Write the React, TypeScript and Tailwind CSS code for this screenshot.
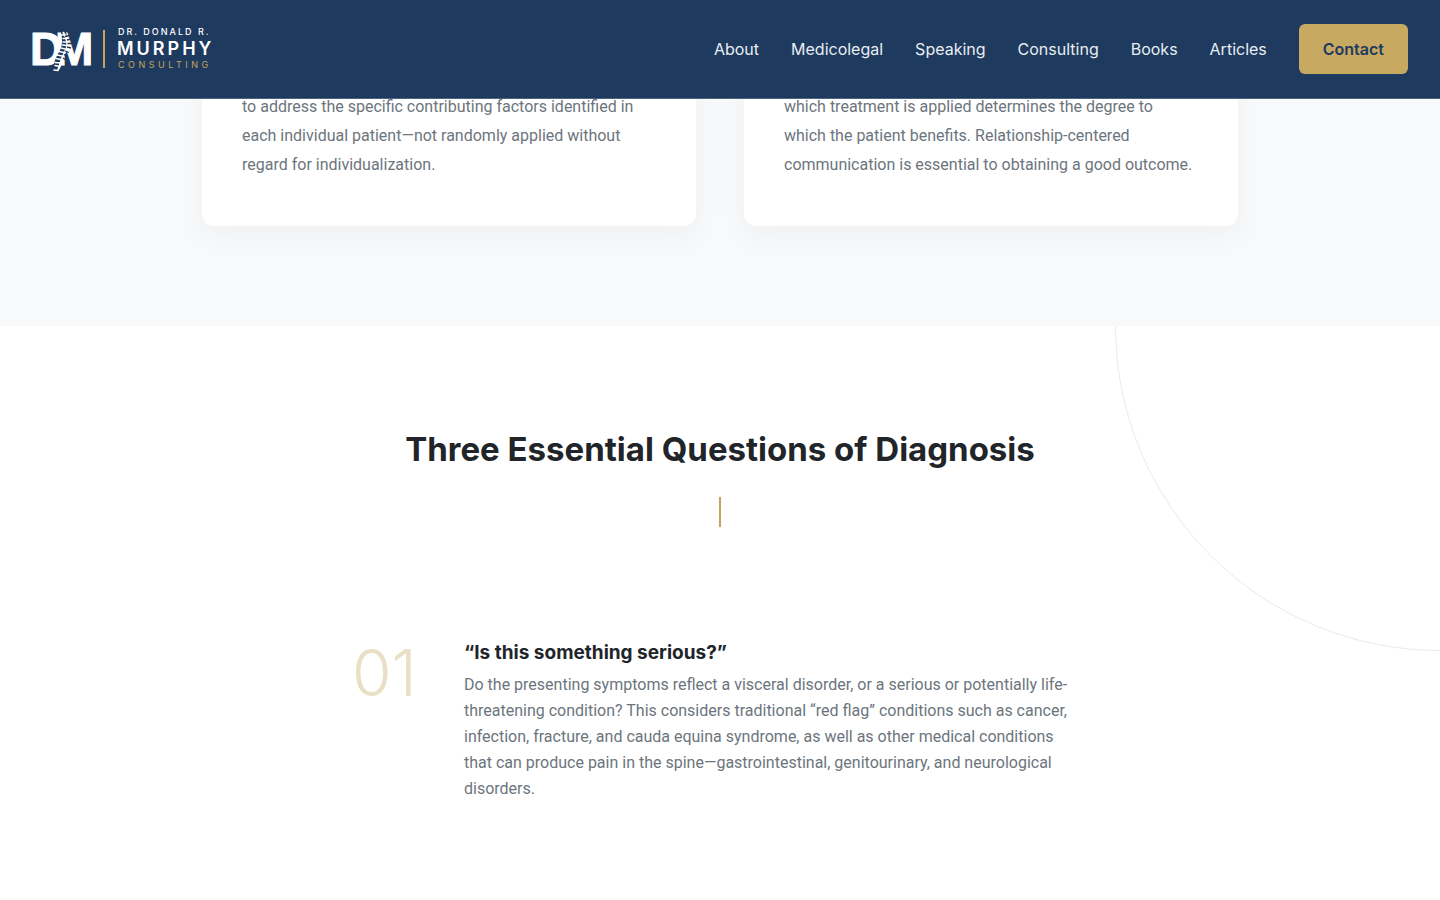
import React from "react";

const navLinks = ["About", "Medicolegal", "Speaking", "Consulting", "Books", "Articles"];

const cards = [
  "to address the specific contributing factors identified in each individual patient—not randomly applied without regard for individualization.",
  "which treatment is applied determines the degree to which the patient benefits. Relationship-centered communication is essential to obtaining a good outcome.",
];

const questions = [
  {
    number: "01",
    title: "“Is this something serious?”",
    text: "Do the presenting symptoms reflect a visceral disorder, or a serious or potentially life-threatening condition? This considers traditional “red flag” conditions such as cancer, infection, fracture, and cauda equina syndrome, as well as other medical conditions that can produce pain in the spine—gastrointestinal, genitourinary, and neurological disorders.",
  },
];

function Logo() {
  return (
    <svg
      className="overflow-visible"
      width="184"
      height="50"
      viewBox="0 0 184 50"
      role="img"
      aria-label="Dr. Donald R. Murphy Consulting"
    >
      <text y="41" fill="#fff" stroke="#fff" fontWeight="700" fontSize="46" fontFamily="'Liberation Sans', sans-serif">
        <tspan x="-2">D</tspan>
        <tspan x="23">M</tspan>
      </text>
      {/* gap that the spine runs through */}
      <path d="M31 6 C33 13 34 20 30 28 C26 34 24 39 23 47" fill="none" stroke="#1e3a5f" strokeWidth="5" />
      <path d="M31 8 C36 15 37 23 32 30 C29 35 29 41 26 46" fill="none" stroke="#fff" strokeWidth="2" />
      <path
        d="M32 11l-3 0M34 14.500l-3 0M35 18l-4 0M34.500 21.500l-4 -0.500M33 25l-4 -1M32 28.500l-5 -1M30 32l-5 -1M29 35.500l-5 -1M29 39l-6 -0.500M28 42.500l-5 -1M26 46.500l-4 -0.500"
        fill="none"
        stroke="#fff"
        strokeWidth="1.5"
        strokeLinecap="round"
      />
      <path
        d="M33 12.500l5 -1M35 16l4 -1M35.500 19.500l4 0M35 23l4 1M33 27l4 1.500M32 30.500l3 2M31 34l3 2"
        fill="none"
        stroke="#1e3a5f"
        strokeWidth="1.3"
      />
      <rect x="71" y="6" width="2" height="38" fill="#c5a55a" />
      <g fontFamily="Inter, sans-serif">
        <text x="86" y="11" fill="#fff" fontSize="9" fontWeight="500" letterSpacing="2">
          DR. DONALD R.
        </text>
        <text x="85" y="31" fill="#fff" fontSize="18" fontWeight="600" letterSpacing="3">
          MURPHY
        </text>
        <text x="86" y="44" fill="#c5a55a" fontSize="9" letterSpacing="3.5">
          CONSULTING
        </text>
      </g>
    </svg>
  );
}

function Header() {
  return (
    <header className="fixed inset-x-0 top-0 z-10 flex items-center justify-between border-b border-[#4b6381] bg-[#1e3a5f] px-8 py-6">
      <a href="#">
        <Logo />
      </a>
      <nav className="flex items-center gap-8 text-[#e9edf2]">
        {navLinks.map((link) => (
          <a key={link} href="#">
            {link}
          </a>
        ))}
        <a href="#" className="rounded-md bg-[#c8a961] px-6 py-3 font-semibold leading-[26px] text-[#1e3a5f]">
          Contact
        </a>
      </nav>
    </header>
  );
}

function App() {
  return (
    <div className="min-h-screen overflow-hidden bg-white font-['Inter',sans-serif] text-base text-[#212529]">
      <Header />
      <section className="bg-[#f8f9fb] pt-16 pb-[100px]">
        <div className="mx-auto grid max-w-[1100px] grid-cols-2 gap-12 px-8">
          {cards.map((text) => (
            <div key={text} className="rounded-xl bg-white px-10 pt-7 pb-[47px] shadow-[0_10px_30px_rgba(0,0,0,0.04)]">
              <p className="font-['Roboto',sans-serif] leading-[29px] text-[#6c757d]">{text}</p>
            </div>
          ))}
        </div>
      </section>

      <section className="relative overflow-hidden pt-[100px] pb-24">
        <div className="absolute -top-[325px] -right-[325px] size-[650px] rounded-full border border-[#e9eaec]" />
        <h2 className="text-center text-[33px] leading-[47px] font-bold">
          Three Essential Questions of Diagnosis
        </h2>
        <div className="mx-auto mt-6 h-[30px] w-[2px] bg-[#c5a55a]" />
        <div className="mx-auto mt-[112px] max-w-[800px] px-8">
          {questions.map((q) => (
            <div key={q.number} className="flex gap-12">
              <span className="w-16 shrink-0 text-[64px] leading-[68px] font-light text-[#e8dfc4]">
                {q.number}
              </span>
              <div>
                <h3 className="mb-1.5 text-[19px] leading-[27px] font-bold">{q.title}</h3>
                <p className="pr-2 font-['Roboto',sans-serif] leading-[26px] text-[#6c757d]">{q.text}</p>
              </div>
            </div>
          ))}
        </div>
      </section>
    </div>
  );
}

export default App;
